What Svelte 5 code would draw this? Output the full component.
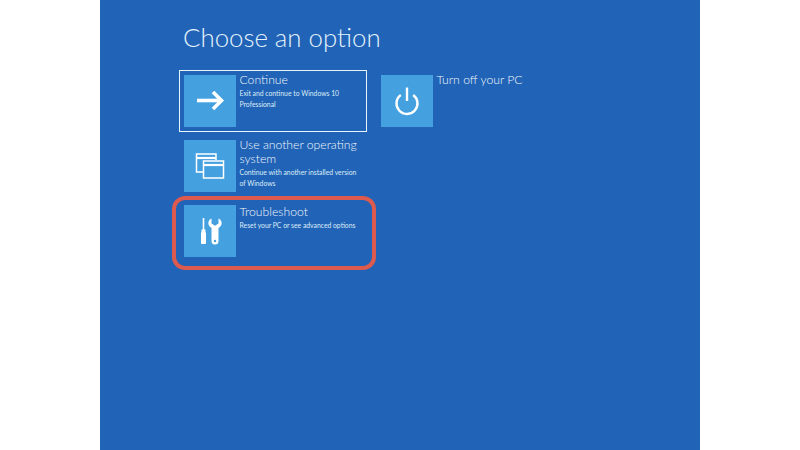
<script>
  const leftOptions = [
    { id: 'continue', title: 'Continue', desc: 'Exit and continue to Windows 10 Professional', selected: true },
    { id: 'os', title: 'Use another operating system', desc: 'Continue with another installed version of Windows' },
    { id: 'troubleshoot', title: 'Troubleshoot', desc: 'Reset your PC or see advanced options', marked: true }
  ];
</script>

{#snippet icon(id)}
  <svg viewBox="0 0 52 52" width="52" height="52" fill="none" stroke="#fff">
    {#if id === 'continue'}
      <path d="M13 25.500h24" stroke-width="3.600" />
      <path d="M29 17 37.500 25.500 29 34" stroke-width="3.600" />
    {:else if id === 'os'}
      <path d="M32 20v-6H12.500v18H19" stroke-width="1.500" />
      <path d="M12.500 18h19.500" stroke-width="2.200" />
      <rect x="19.500" y="21" width="20" height="17" stroke-width="1.500" fill="#45a0e0" />
      <path d="M19.500 25h20" stroke-width="2.200" />
    {:else if id === 'troubleshoot'}
      <path d="M19.500 13v12" stroke-width="1.600" />
      <path d="M17.500 24.500h4v3h.500V38a1 1 0 0 1-1 1h-3a1 1 0 0 1-1-1V27.500h.500z" fill="#fff" stroke="none" />
      <path d="M27.500 13.500c-2.500 1.200-3.500 3.400-3.100 5.500.4 1.800 1.500 3.100 3.100 3.800V36a3.500 3.500 0 0 0 7 0V22.800c1.600-.7 2.700-2 3.100-3.800.4-2.100-.6-4.300-3.100-5.500v5l-3.500 2.200-3.500-2.200z" fill="#fff" stroke="none" />
      <circle cx="31" cy="36" r="1.200" fill="#45a0e0" stroke="none" />
    {:else}
      <path d="M26 12.500v13.500" stroke-width="2.400" />
      <path d="M19.800 20a10.500 10.500 0 1 0 12.400 0" stroke-width="2.400" />
    {/if}
  </svg>
{/snippet}

{#snippet option(o)}
  <div class="option" class:selected={o.selected} class:marked={o.marked}>
    <div class="tile">{@render icon(o.id)}</div>
    <div class="text">
      <div class="title">{o.title}</div>
      {#if o.desc}<div class="desc">{o.desc}</div>{/if}
    </div>
  </div>
{/snippet}

<div class="page">
  <main class="screen">
    <h1>Choose an option</h1>
    <div class="columns">
      <div class="col">
        {#each leftOptions as o}
          {@render option(o)}
        {/each}
      </div>
      <div class="col">
        {@render option({ id: 'power', title: 'Turn off your PC' })}
      </div>
    </div>
  </main>
</div>

<style>
  :global(body) {
    margin: 0;
    background: #fff;
  }
  .page {
    width: 800px;
    height: 450px;
    display: flex;
    justify-content: center;
    overflow: hidden;
  }
  .screen {
    width: 600px;
    height: 450px;
    box-sizing: border-box;
    padding: 18px 0 0 79px;
    background: #2163b6;
    color: #fff;
    font-family: Lato, "Liberation Sans", sans-serif;
  }
  h1 {
    margin: 0 0 14px 4px;
    font-size: 25.800px;
    line-height: 38px;
    font-weight: 300;
    color: #e4f2fb;
  }
  .columns {
    display: flex;
    gap: 9px;
  }
  .col {
    display: flex;
    flex-direction: column;
    gap: 3px;
  }
  .option {
    position: relative;
    box-sizing: border-box;
    width: 193px;
    height: 62px;
    padding: 3.500px;
    border: 1.500px solid transparent;
    display: flex;
    gap: 4px;
  }
  .col:first-child .option {
    width: 188px;
  }
  .selected {
    border-color: #e8f3fb;
  }
  .marked::after {
    content: '';
    position: absolute;
    left: -8px;
    right: -10px;
    top: -5px;
    bottom: -9px;
    border: 4px solid #dc5a4e;
    border-radius: 13px;
  }
  .tile {
    flex: none;
    width: 52px;
    height: 52px;
    background: #45a0e0;
  }
  .text {
    width: 125px;
    margin-top: -2px;
  }
  .marked .text {
    margin-top: 0;
  }
  .title {
    font-size: 12.200px;
    line-height: 14px;
    font-weight: 300;
    color: #f0f7fc;
  }
  .desc {
    margin-top: 1px;
    font-size: 6.800px;
    line-height: 11px;
    color: #dcedf8;
  }
</style>
